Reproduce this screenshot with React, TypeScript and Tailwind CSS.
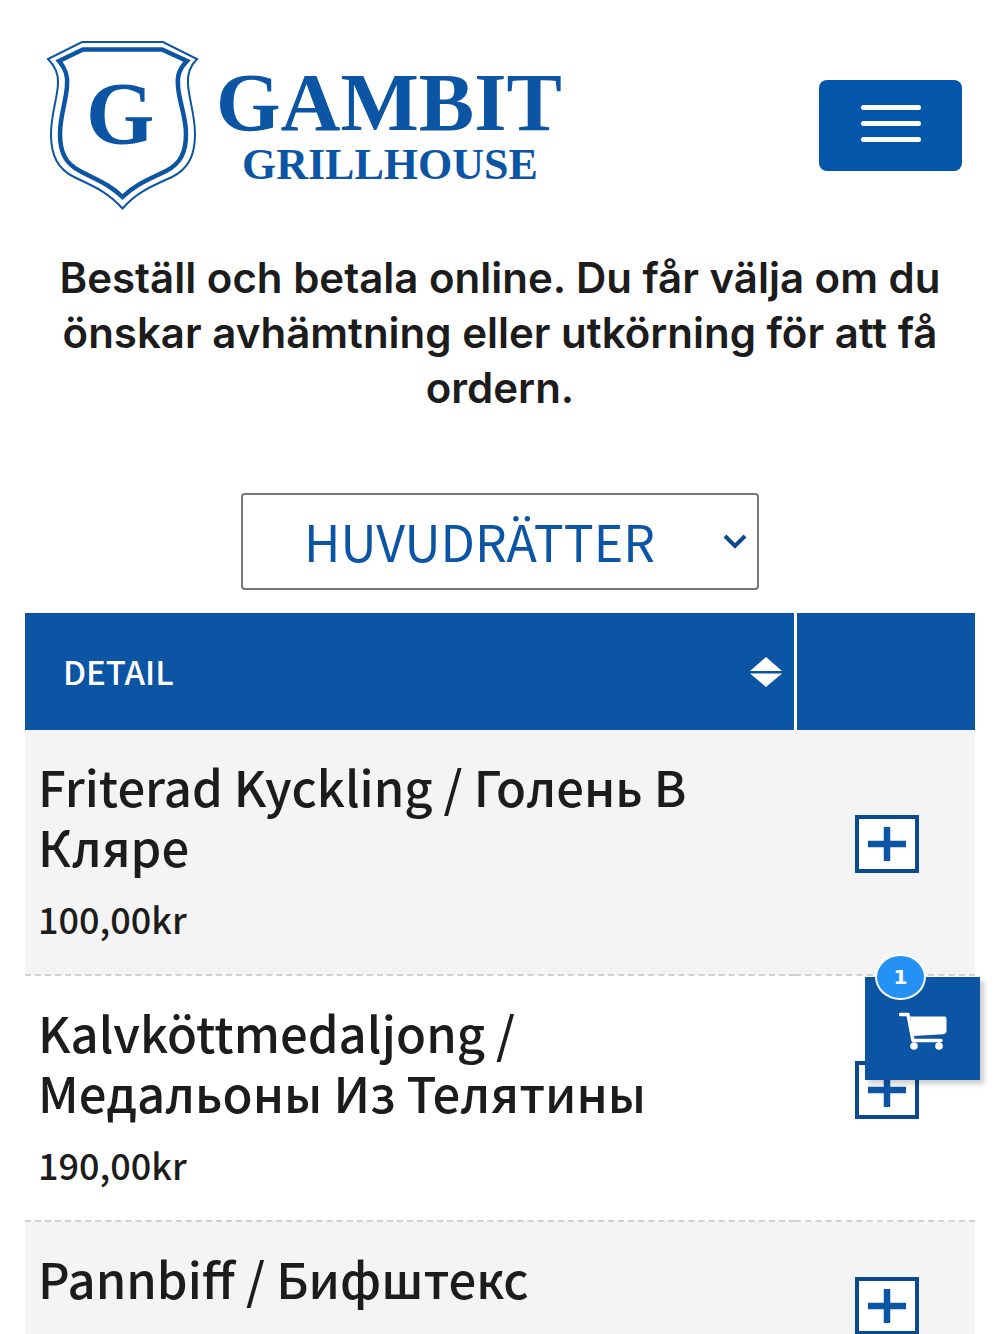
import React from "react";

const dishes = [
  { name: "Friterad Kyckling / Голень В Кляре", price: "100,00kr" },
  { name: "Kalvköttmedaljong / Медальоны Из Телятины", price: "190,00kr" },
  { name: "Pannbiff / Бифштекс", price: "150,00kr" },
];

function Logo() {
  return (
    <svg viewBox="40 35 530 180" className="w-[530px] shrink" role="img" aria-label="Gambit Grillhouse">
      <g fill="none" stroke="#0c55a4" strokeLinejoin="miter">
        <path
          strokeWidth="2"
          d="M82 42H163L197 59C190 66 187 73 188 84C189 100 195 115 195 134C195 156 188 169 172 177C152 186 137 192 122.500 208.500C108 192 93 186 74 177C58 169 51 156 51 134C51 115 57 100 58 84C59 73 55 66 48 59Z"
        />
        <path
          strokeWidth="4.500"
          d="M83 49.500H162L187 61C179 69 177 76 178 86C179 102 186 116 186 134C186 153 180 164 166 171C148 180 136 184 122.500 197C109 184 97 180 80 171C66 164 60 153 60 134C60 116 66 102 67 86C68 76 66 69 59 61Z"
        />
      </g>
      <g fill="#0c55a4" fontFamily="Liberation Serif, serif" fontWeight="700">
        <text x="86" y="143" fontSize="88">G</text>
        <text x="216" y="130" fontSize="83">GAMBIT</text>
        <text x="242" y="179" fontSize="44">GRILLHOUSE</text>
      </g>
    </svg>
  );
}

function PlusIcon() {
  return (
    <svg viewBox="0 0 38 34" className="h-[34px] w-[38px]" aria-hidden="true">
      <path d="M3 17H35M19 3V31" stroke="#0c55a4" strokeWidth="6.500" strokeLinecap="square" />
    </svg>
  );
}

function CartIcon() {
  return (
    <svg viewBox="0 0 48 38" className="mt-1 h-[38px] w-12" aria-hidden="true">
      <path d="M1.500 2.500H9L14 28.500H42" fill="none" stroke="#fff" strokeWidth="3.500" strokeLinecap="round" strokeLinejoin="round" />
      <path d="M11 4.500H46Q47.500 4.500 47.500 7V19Q47 22 44 22.200L14 24Z" fill="#fff" />
      <circle cx="15" cy="34" r="3.800" fill="#fff" />
      <circle cx="40" cy="34" r="3.800" fill="#fff" />
    </svg>
  );
}

export default function App() {
  return (
    <div className="bg-white font-['Noto_Sans_CJK_SC',sans-serif] text-[#1c1c1c]">
      <header className="flex items-center justify-between pt-[35px] pr-[38px] pl-10">
        <Logo />
        <button
          type="button"
          aria-label="Meny"
          className="flex h-[91px] w-[143px] flex-col items-center justify-center gap-[11px] rounded-lg bg-[#0356a9] pb-1"
        >
          <span className="h-[5px] w-[60px] rounded-full bg-white" />
          <span className="h-[5px] w-[60px] rounded-full bg-white" />
          <span className="h-[5px] w-[60px] rounded-full bg-white" />
        </button>
      </header>

      <main className="px-[25px]">
        <h1 className="mt-[35px] px-6 text-center font-['Inter',sans-serif] text-[42px] leading-[55px] font-semibold">
          Beställ och betala online. Du får välja om du önskar avhämtning eller utkörning för att få ordern.
        </h1>

        <div className="relative mx-auto mt-[78px] w-[518px]">
          <select
            aria-label="Kategori"
            className="h-[97px] w-full appearance-none rounded border-2 border-[#777] bg-white pr-20 pb-0.5 pl-[61px] text-[50px] font-normal text-[#0c55a4]"
          >
            <option>HUVUDRÄTTER</option>
          </select>
          <svg viewBox="0 0 24 16" className="pointer-events-none absolute top-[41px] right-[12px] h-4 w-6" aria-hidden="true">
            <path d="M2 2L12 12L22 2" fill="none" stroke="#0c4a90" strokeWidth="4" />
          </svg>
        </div>

        <table className="mt-[23px] w-full table-fixed border-collapse">
          <thead>
            <tr className="h-[117px] bg-[#0c55a4] text-white">
              <th scope="col" className="border-r-[3px] border-white pr-3 pl-[38px] text-left text-[33px] font-medium">
                <button type="button" className="flex w-full items-center justify-between">
                  DETAIL
                  <svg viewBox="0 0 32 30" className="h-[30px] w-8" aria-hidden="true">
                    <path d="M16 0L32 14H0ZM0 16.500H32L16 30Z" fill="#fff" />
                  </svg>
                </button>
              </th>
              <th scope="col" aria-label="Lägg till" className="w-[180px]" />
            </tr>
          </thead>
          <tbody>
            {dishes.map((dish) => (
              <tr key={dish.name} className="border-b-2 border-dashed border-[#d2d2d2] odd:bg-[#f4f4f4]">
                <td className="pt-[26px] pr-12 pb-[26px] pl-[13px]">
                  <h2 className="text-[49px] leading-[60px] font-medium">{dish.name}</h2>
                  <p className="mt-3 text-[36px] leading-[60px] font-medium">{dish.price}</p>
                </td>
                <td className="pb-4 pl-1 text-center">
                  <button
                    type="button"
                    aria-label={`Lägg till ${dish.name}`}
                    className="inline-flex h-[58px] w-16 items-center justify-center border-4 border-[#0c4a90] bg-white align-middle"
                  >
                    <PlusIcon />
                  </button>
                </td>
              </tr>
            ))}
          </tbody>
        </table>
      </main>

      <button
        type="button"
        aria-label="Varukorg, 1 vara"
        className="fixed right-5 bottom-[254px] flex h-[103px] w-[115px] items-center justify-center bg-[#0c55a4] shadow-[4px_4px_5px_rgba(0,0,0,0.2)]"
      >
        <CartIcon />
        <span className="absolute -top-[23px] left-[10px] flex h-[46px] w-[51px] items-center justify-center rounded-[50%] border-2 border-white bg-[#2492f4] font-['DejaVu_Sans',sans-serif] text-xl font-bold text-white">
          1
        </span>
      </button>
    </div>
  );
}
